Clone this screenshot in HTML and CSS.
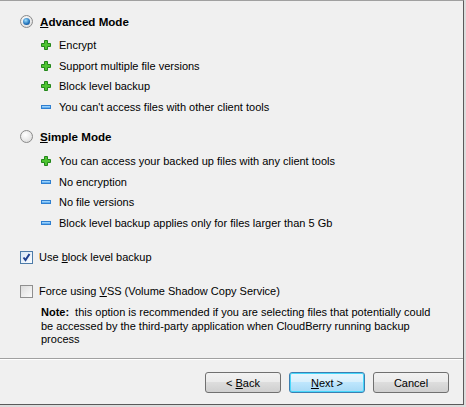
FILE: index.html
```html
<html>
<head>
    <meta charset="UTF-8">
    <link rel="stylesheet" href="styles.css">
</head>

<body>

<div class="window">
    <div class="panel">
        <div class="mode">
            <span class="radio checked"></span>
            <span class="mode_title"><u>A</u>dvanced Mode</span>
        </div>
        <ul class="features first">
            <li><svg class="plus" viewBox="0 0 10 10"><path d="M3.5 0.5h3v3h3v3h-3v3h-3v-3h-3v-3h3z"/></svg>Encrypt</li>
            <li><svg class="plus" viewBox="0 0 10 10"><path d="M3.5 0.5h3v3h3v3h-3v3h-3v-3h-3v-3h3z"/></svg>Support multiple file versions</li>
            <li><svg class="plus" viewBox="0 0 10 10"><path d="M3.5 0.5h3v3h3v3h-3v3h-3v-3h-3v-3h3z"/></svg>Block level backup</li>
            <li><span class="minus"></span>You can't access files with other client tools</li>
        </ul>

        <div class="mode second">
            <span class="radio"></span>
            <span class="mode_title"><u>S</u>imple Mode</span>
        </div>
        <ul class="features">
            <li><svg class="plus" viewBox="0 0 10 10"><path d="M3.5 0.5h3v3h3v3h-3v3h-3v-3h-3v-3h3z"/></svg>You can access your backed up files with any client tools</li>
            <li><span class="minus"></span>No encryption</li>
            <li><span class="minus"></span>No file versions</li>
            <li><span class="minus"></span>Block level backup applies only for files larger than 5 Gb</li>
        </ul>

        <div class="option">
            <span class="check checked">
                <svg viewBox="0 0 9 9"><path d="M1.5 4.5l2 2.5 4-6"/></svg>
            </span>
            <span>Use <u>b</u>lock level backup</span>
        </div>
        <div class="option">
            <span class="check"></span>
            <span>Force using <u>V</u>SS (Volume Shadow Copy Service)</span>
        </div>
        <p class="note"><b class="note_label">Note:</b><span>this option is recommended if you are selecting files that potentially could be accessed by the third-party application when CloudBerry running backup process</span></p>
    </div>

    <div class="footer">
        <button>&lt; <u>B</u>ack</button>
        <button class="default"><u>N</u>ext &gt;</button>
        <button>Cancel</button>
    </div>
</div>

</body>
</html>
```

FILE: styles.css
```css
body {
    margin: 0;
    background: #dcdcdc;
    font-family: "Liberation Sans", Arial, sans-serif;
    font-size: 11px;
    color: #000;
}

.window {
    box-sizing: border-box;
    width: 464px;
    height: 405px;
    background: #f0f0f0;
    border-top: 1px solid #a0a0a0;
    border-right: 1px solid #5a5a5a;
    border-bottom: 1px solid #5a5a5a;
    display: flex;
    flex-direction: column;
}

.panel {
    height: 357px;
    box-sizing: border-box;
    padding: 10px 0 0 20px;
}

.mode {
    height: 20px;
    display: flex;
    align-items: center;
}

.mode.second {
    margin-top: 9px;
}

.mode_title {
    margin-left: 7px;
    font-weight: bold;
    font-size: 11.6px;
}

.radio {
    box-sizing: border-box;
    width: 13px;
    height: 13px;
    border-radius: 50%;
    border: 1px solid #8a8a8a;
    background: radial-gradient(circle at 40% 35%, #ffffff, #d6d6d6);
    display: flex;
    align-items: center;
    justify-content: center;
}

.radio.checked::after {
    content: "";
    width: 7px;
    height: 7px;
    border-radius: 50%;
    background: radial-gradient(circle at 40% 35%, #9fe0ff, #1f6fb8 60%, #0d3f7a);
}

.features {
    list-style: none;
    margin: 5px 0 0 21px;
    padding: 0;
}

.features.first {
    margin-top: 4px;
}

.features li {
    height: 20.5px;
    display: flex;
    align-items: center;
}

.plus {
    width: 10px;
    height: 10px;
    margin-right: 8px;
    flex-shrink: 0;
}

.plus path {
    fill: #4ec431;
    stroke: #23861a;
    stroke-width: 1;
}

.minus {
    box-sizing: border-box;
    width: 10px;
    height: 4px;
    margin-right: 8px;
    flex-shrink: 0;
    border: 1px solid #2f7fd0;
    background: linear-gradient(#b5e0ff, #4da3ec);
}

.option {
    height: 20px;
    margin-top: 14px;
    display: flex;
    align-items: center;
}

.check {
    box-sizing: border-box;
    width: 13px;
    height: 13px;
    margin-right: 6px;
    border: 1px solid #8f8f8f;
    background: linear-gradient(135deg, #dcdcdc, #fbfbfb);
    display: flex;
    align-items: center;
    justify-content: center;
}

.check.checked {
    border-color: #4d7ba8;
    background: linear-gradient(135deg, #d7e6f5, #fbfdff);
}

.check svg {
    width: 9px;
    height: 9px;
}

.check path {
    fill: none;
    stroke: #1d3f8f;
    stroke-width: 2;
}

.note {
    margin: 5px 20px 0 21px;
    line-height: 13.5px;
}

.note_label {
    margin-right: 6px;
}

.footer {
    flex: 1;
    border-top: 1px solid #a0a0a0;
    box-shadow: inset 0 1px 0 #ffffff;
    display: flex;
    justify-content: flex-end;
    align-items: flex-start;
    gap: 8px;
    padding: 13px 14px 0 0;
}

.footer button {
    width: 76px;
    height: 21px;
    border: 1px solid #707070;
    border-radius: 3px;
    background: linear-gradient(#f2f2f2 0%, #ebebeb 45%, #dddddd 50%, #cfcfcf 100%);
    font-family: "Liberation Sans", Arial, sans-serif;
    font-size: 11px;
    color: #000;
    padding: 0;
    outline: none;
}

.footer button.default {
    border-color: #3c7fb1;
    box-shadow: inset 0 0 0 1px #48d8fb;
    background: linear-gradient(#eaf6fd 0%, #d9f0fc 45%, #bee6fd 50%, #a7d9f5 100%);
}
```
